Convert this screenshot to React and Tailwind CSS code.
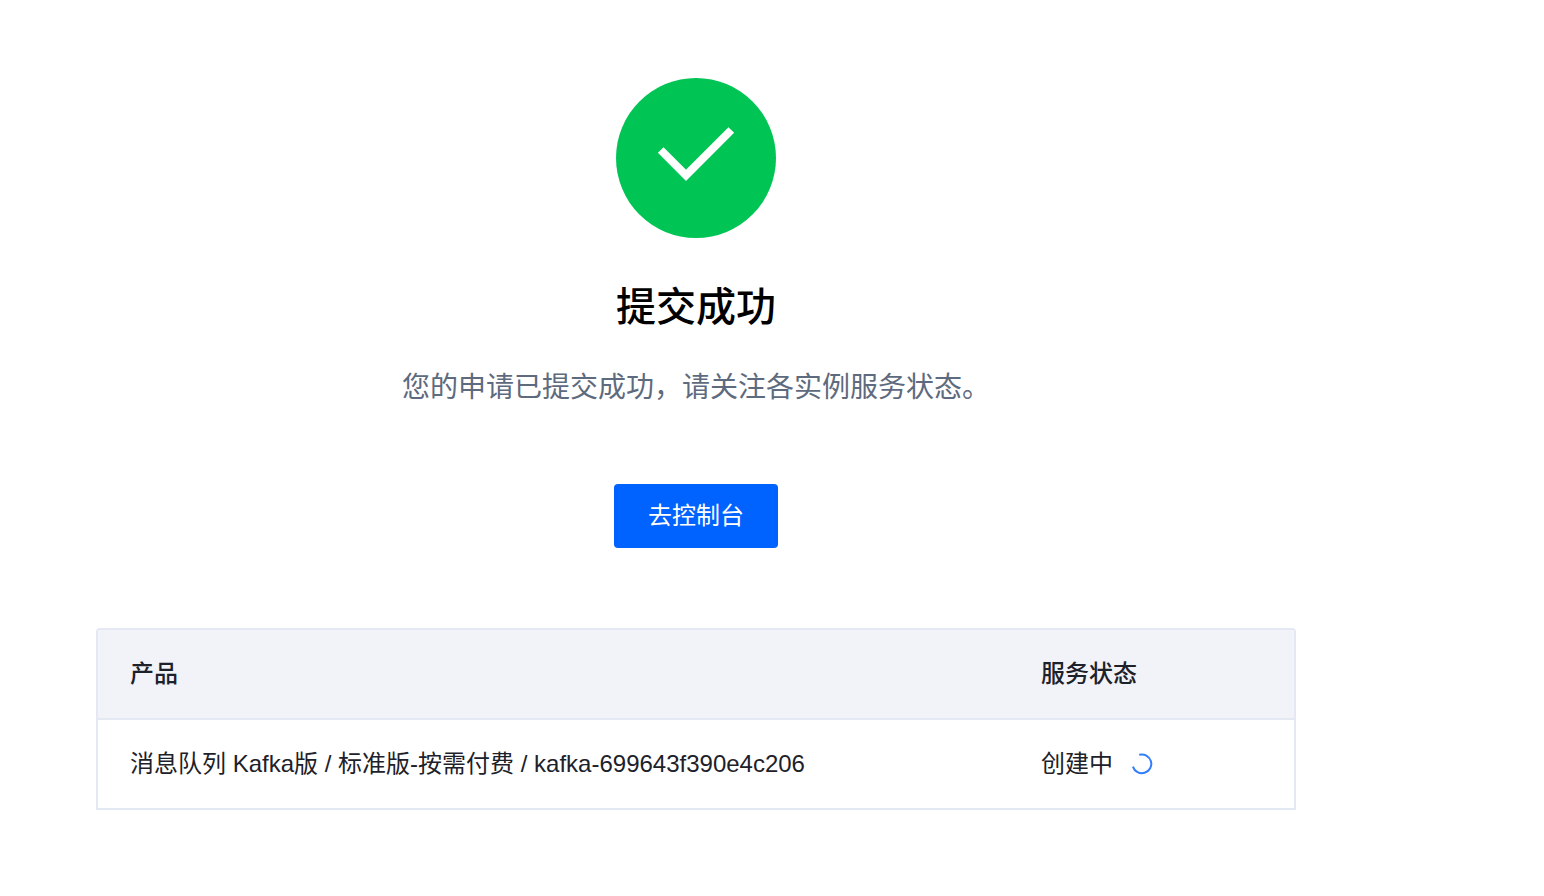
import React from 'react';

const instances = [
  {
    id: 'kafka-699643f390e4c206',
    product: '消息队列 Kafka版',
    plan: '标准版-按需付费',
    status: '创建中',
  },
];

const SuccessIcon = () => (
  <svg className="size-40" viewBox="0 0 160 160" fill="none" aria-hidden="true">
    <circle cx="80" cy="80" r="80" fill="#00c454" />
    <path d="M44.7 72L70 97.3L115.3 52" stroke="#fff" strokeWidth="8" />
  </svg>
);

const Spinner = () => (
  <svg className="size-6" viewBox="0 0 24 24" fill="none" aria-hidden="true">
    <path d="M10.2 2.8A9.4 9.4 0 1 1 3.9 14.6" stroke="#337dff" strokeWidth="2" />
  </svg>
);

const App = () => {
  return (
    <div className="min-h-screen bg-white px-24 py-[78px] font-['Liberation_Sans','Noto_Sans_CJK_SC',sans-serif] text-[#1d2129]">
      <main className="flex max-w-[1200px] flex-col items-center">
        <SuccessIcon />
        <h1 className="mt-10 text-[40px] leading-[58px] font-medium text-black">提交成功</h1>
        <p className="mt-8 text-[28px] leading-10 text-[#5e6a7d]">
          您的申请已提交成功，请关注各实例服务状态。
        </p>
        <button
          type="button"
          className="mt-19 h-16 cursor-pointer rounded bg-[#0062ff] px-[34px] text-2xl text-white"
        >
          去控制台
        </button>

        {/* Instance status */}
        <div className="mt-20 w-full overflow-hidden rounded-t border-2 border-[#e3e8f2]">
          <table className="w-full table-fixed border-separate border-spacing-0 text-left text-2xl">
            <thead className="bg-[#f2f3f8]">
              <tr className="h-[90px]">
                <th scope="col" className="border-b-2 border-[#e3e8f2] px-8 font-medium">产品</th>
                <th scope="col" className="w-[285px] border-b-2 border-[#e3e8f2] px-8 font-medium">服务状态</th>
              </tr>
            </thead>
            <tbody>
              {instances.map((item) => (
                <tr key={item.id} className="h-[88px]">
                  <td className="px-8">
                    {item.product} / {item.plan} / {item.id}
                  </td>
                  <td className="px-8">
                    <div className="flex items-center gap-4">
                      <span>{item.status}</span>
                      <Spinner />
                    </div>
                  </td>
                </tr>
              ))}
            </tbody>
          </table>
        </div>
      </main>
    </div>
  );
};

export default App;
